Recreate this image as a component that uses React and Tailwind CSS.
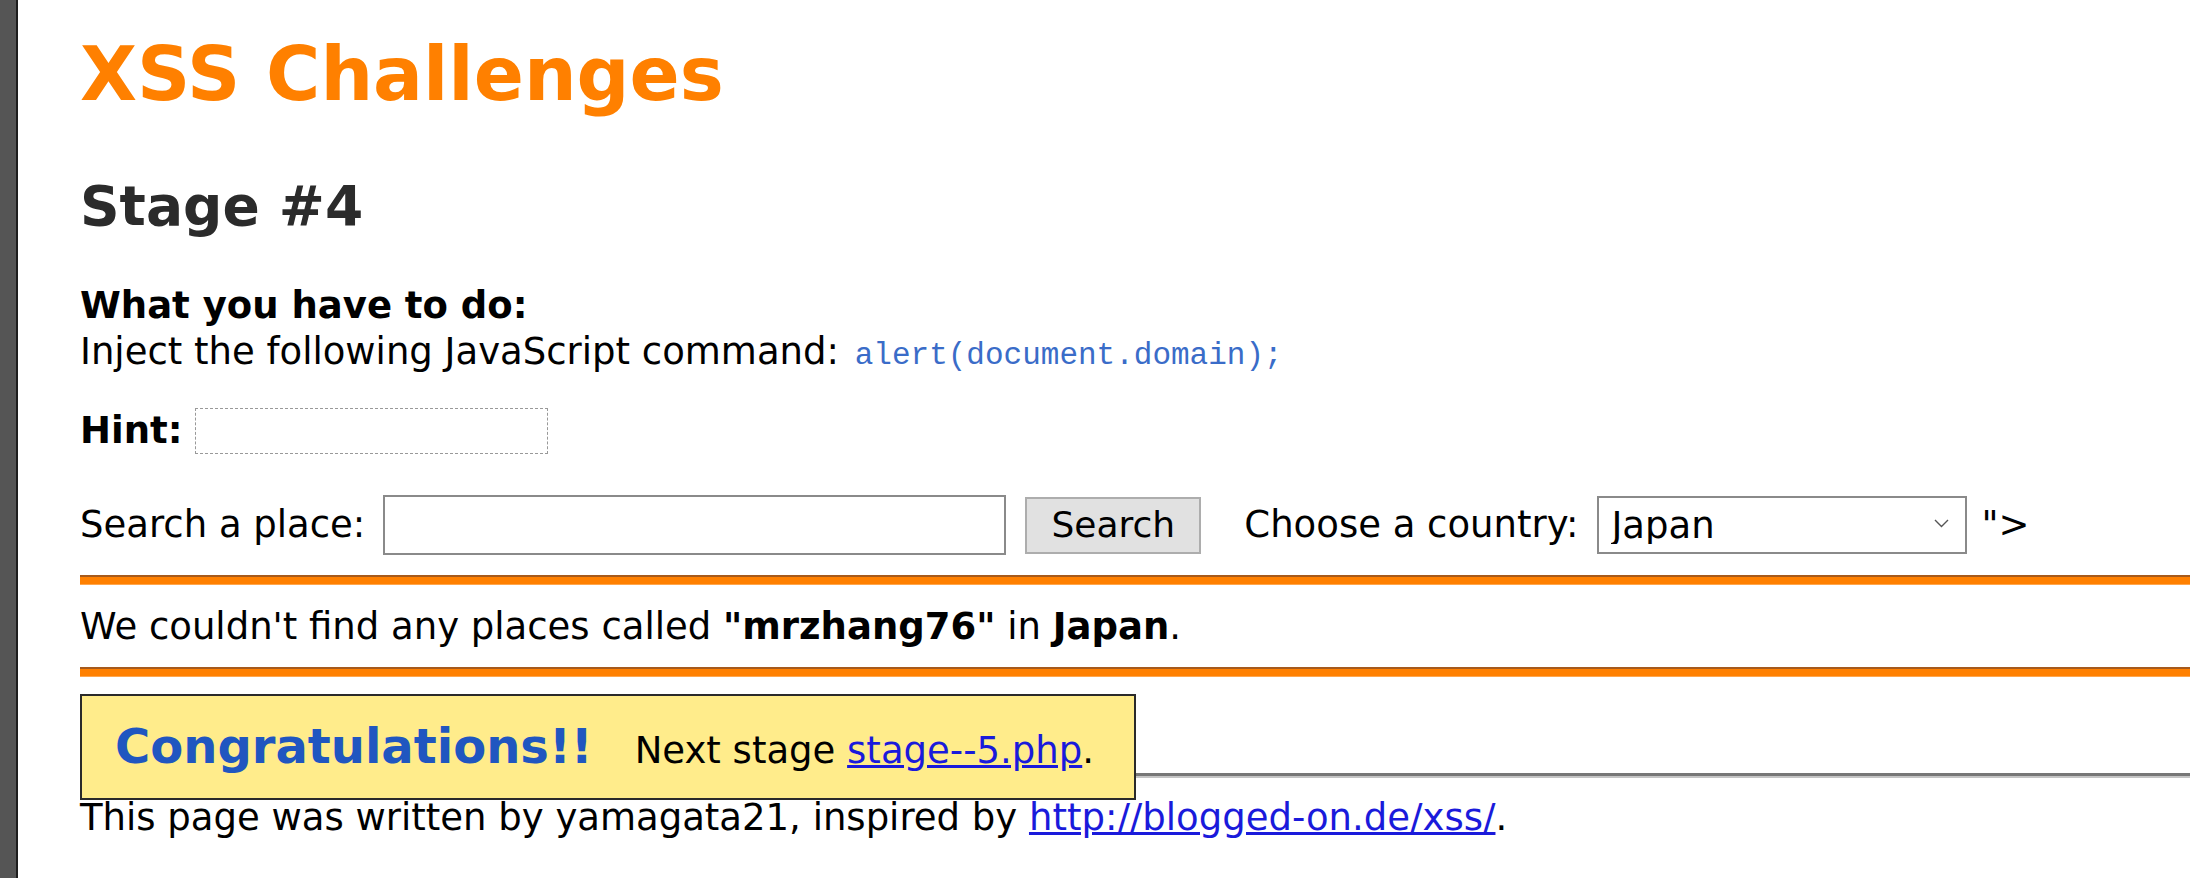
import React from 'react'

// XSS Challenges, stage 4 result page
export default function App() {
  return (
    <div className="flex min-h-screen bg-white font-['DejaVu_Sans',sans-serif] text-[37px] text-black">
      <div className="w-[18px] shrink-0 bg-[#555555] border-r-2 border-[#1e1e1e]" />

      <div className="relative flex-1 pl-[62px] overflow-hidden">
        <h1 className="mt-[31px] text-[74px] leading-[86px] font-bold text-[#ff8000]">
          XSS Challenges
        </h1>
        <h2 className="mt-[57px] text-[55px] leading-[64px] font-bold text-[#2b2b2b]">
          Stage #4
        </h2>

        <p className="mt-[45px] leading-[46px]">
          <b>What you have to do:</b>
          <br />
          Inject the following JavaScript command:{' '}
          <code className="ml-[4px] font-['Liberation_Mono',monospace] text-[31px] leading-none text-[#3a6cc8]">
            alert(document.domain);
          </code>
        </p>

        <div className="mt-[33px] flex h-[46px] items-center leading-[46px]">
          <b>Hint:</b>
          <span className="ml-[13px] h-[46px] w-[353px] border border-dashed border-[#999999]" />
        </div>

        <form className="mt-[41px] flex h-[60px] items-center leading-[46px]" onSubmit={(e) => e.preventDefault()}>
          <span>Search a place:</span>
          <input
            type="text"
            className="ml-[18px] h-[60px] w-[623px] border-2 border-[#8a8a8a] bg-white px-2 outline-none"
          />
          <button
            type="submit"
            className="ml-[19px] h-[57px] w-[176px] border-2 border-[#adadad] bg-[#e1e1e1] text-[36px] leading-none"
          >
            Search
          </button>
          <span className="ml-[43px]">Choose a country:</span>
          <div className="relative ml-[19px] h-[58px] w-[370px]">
            <select
              defaultValue="Japan"
              className="h-full w-full appearance-none border-2 border-[#8a8a8a] bg-white pl-[12px] text-[37px] leading-none outline-none"
            >
              <option>Japan</option>
              <option>Germany</option>
              <option>USA</option>
              <option>United Kingdom</option>
            </select>
            <svg
              className="pointer-events-none absolute right-[18px] top-[23px]"
              width="15"
              height="9"
              viewBox="0 0 15 9"
              fill="none"
            >
              <path d="M1 1l6.5 6.5L14 1" stroke="#555" strokeWidth="1.4" />
            </svg>
          </div>
          <span className="ml-[14px]">"&gt;</span>
        </form>

        <div className="mt-[20px] h-[10px] border-t-2 border-b border-t-[#a65a1c] border-b-[#ffa64d] bg-[#ff8000]" />

        <p className="mt-[19px] leading-[46px]">
          We couldn't find any places called <b>"mrzhang76"</b> in <b>Japan</b>.
        </p>

        <div className="mt-[17px] h-[10px] border-t-2 border-b border-t-[#a65a1c] border-b-[#ffa64d] bg-[#ff8000]" />

        <div className="mt-[96px] h-[5px] border-t-[3px] border-b-2 border-t-[#777777] border-b-[#c4c4c4]" />

        <p className="mt-[17px] leading-[46px]">
          This page was written by yamagata21, inspired by{' '}
          <a href="#" className="text-[#1a1adb] underline">
            http://blogged-on.de/xss/
          </a>
          .
        </p>

        <div className="absolute left-[62px] top-[694px] box-border h-[106px] w-[1056px] border-2 border-[#2a2a2a] bg-[#ffec8b] pl-[33px] pt-[22px]">
          <div className="flex items-baseline">
            <span className="text-[48px] leading-[56px] font-bold text-[#2056c0]">Congratulations!!</span>
            <span className="ml-[42px] leading-[46px]">
              Next stage{' '}
              <a href="#" className="text-[#1a1adb] underline">
                stage--5.php
              </a>
              .
            </span>
          </div>
        </div>
      </div>
    </div>
  )
}
